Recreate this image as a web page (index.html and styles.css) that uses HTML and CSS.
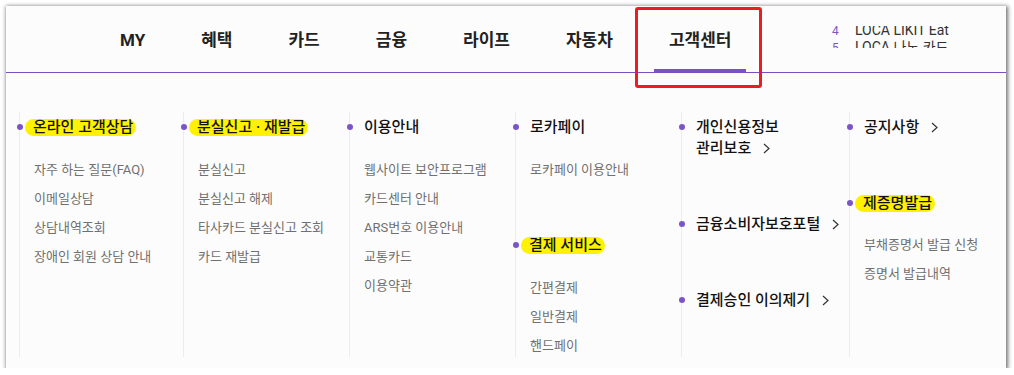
FILE: index.html
```html
<!DOCTYPE html>
<html lang="ko">
<head>
    <meta charset="UTF-8">
    <meta name="viewport" content="width=device-width, initial-scale=1.0">
    <title>고객센터</title>
    <link rel="stylesheet" href="styles.css">
</head>
<body>

    <div class="window">
        <div class="header">
            <ul class="gnb">
                <li class="gnb-item">MY</li>
                <li class="gnb-item">혜택</li>
                <li class="gnb-item">카드</li>
                <li class="gnb-item">금융</li>
                <li class="gnb-item">라이프</li>
                <li class="gnb-item">자동차</li>
                <li class="gnb-item active">고객센터</li>
            </ul>

            <!-- rolling ranking, only part of it is visible -->
            <div class="rank">
                <ol class="rank-list">
                    <li><span class="rank-num">4</span>LOCA LIKIT Eat</li>
                    <li><span class="rank-num">5</span>LOCA 나노 카드</li>
                </ol>
            </div>

            <div class="mark"></div>
        </div>

        <div class="menu">
            <div class="col">
                <div class="group">
                    <h3 class="title"><span class="hl">온라인 고객상담</span></h3>
                    <ul class="sub">
                        <li>자주 하는 질문(FAQ)</li>
                        <li>이메일상담</li>
                        <li>상담내역조회</li>
                        <li>장애인 회원 상담 안내</li>
                    </ul>
                </div>
            </div>

            <div class="col">
                <div class="group">
                    <h3 class="title"><span class="hl">분실신고 · 재발급</span></h3>
                    <ul class="sub">
                        <li>분실신고</li>
                        <li>분실신고 해제</li>
                        <li>타사카드 분실신고 조회</li>
                        <li>카드 재발급</li>
                    </ul>
                </div>
            </div>

            <div class="col">
                <div class="group">
                    <h3 class="title">이용안내</h3>
                    <ul class="sub">
                        <li>웹사이트 보안프로그램</li>
                        <li>카드센터 안내</li>
                        <li>ARS번호 이용안내</li>
                        <li>교통카드</li>
                        <li>이용약관</li>
                    </ul>
                </div>
            </div>

            <div class="col">
                <div class="group has-sub">
                    <h3 class="title">로카페이</h3>
                    <ul class="sub">
                        <li>로카페이 이용안내</li>
                    </ul>
                </div>
                <div class="group">
                    <h3 class="title"><span class="hl">결제 서비스</span></h3>
                    <ul class="sub">
                        <li>간편결제</li>
                        <li>일반결제</li>
                        <li>핸드페이</li>
                    </ul>
                </div>
            </div>

            <div class="col col-wide">
                <div class="group">
                    <h3 class="title">개인신용정보<br>관리보호<svg class="arrow" viewBox="0 0 7 11"><polyline points="1,1 6,5.5 1,10"/></svg></h3>
                </div>
                <div class="group">
                    <h3 class="title">금융소비자보호포털<svg class="arrow" viewBox="0 0 7 11"><polyline points="1,1 6,5.5 1,10"/></svg></h3>
                </div>
                <div class="group">
                    <h3 class="title">결제승인 이의제기<svg class="arrow" viewBox="0 0 7 11"><polyline points="1,1 6,5.5 1,10"/></svg></h3>
                </div>
            </div>

            <div class="col">
                <div class="group">
                    <h3 class="title">공지사항<svg class="arrow" viewBox="0 0 7 11"><polyline points="1,1 6,5.5 1,10"/></svg></h3>
                </div>
                <div class="group">
                    <h3 class="title"><span class="hl">제증명발급</span></h3>
                    <ul class="sub sub-tight">
                        <li>부채증명서 발급 신청</li>
                        <li>증명서 발급내역</li>
                    </ul>
                </div>
            </div>
        </div>
    </div>

</body>
</html>
```

FILE: styles.css
```css
body {
    margin: 0;
    background-color: #ffffff;
    font-family: Roboto, "Noto Sans CJK KR", sans-serif;
    color: #111;
}

ul, ol {
    list-style: none;
    margin: 0;
    padding: 0;
}

h3 {
    margin: 0;
}

/* Window frame */
.window {
    position: relative;
    margin: 6px 0 0 6px;
    width: 1000px;
    height: 362px;
    background-color: #fcfcfc;
    box-shadow: 1px 1px 4px 1px rgba(0, 0, 0, 0.55);
    overflow: hidden;
}

/* Header / GNB */
.header {
    position: relative;
    height: 66px;
    border-bottom: 1px solid #7a4fc6;
}

.gnb {
    display: flex;
    gap: 26px;
    margin-left: 99px;
}

.gnb-item {
    box-sizing: border-box;
    height: 66px;
    padding: 22px 15px 0;
    line-height: 24px;
    font-size: 17px;
    font-weight: 700;
    color: #222;
    border-bottom: 3px solid transparent;
}

.gnb-item.active {
    border-bottom-color: #7a52c7;
}

.rank {
    position: absolute;
    left: 826px;
    top: 20px;
    height: 22px;
    overflow: hidden;
}

.rank-list {
    margin-top: -4px;
}

.rank-list li {
    line-height: 16px;
    font-size: 14px;
    color: #333;
}

.rank-num {
    display: inline-block;
    width: 23px;
    font-size: 12px;
    color: #7b55c7;
}

/* red annotation box */
.mark {
    position: absolute;
    left: 629px;
    top: 1px;
    width: 121px;
    height: 75px;
    border: 3px solid #ec1c24;
    border-radius: 3px;
}

/* Mega menu */
.menu {
    display: flex;
    margin: 39px 0 0 13px;
}

.col {
    flex: none;
    box-sizing: border-box;
    width: 166px;
    height: 245px;
    padding: 5px 0 0 14px;
    border-left: 1px solid #ececec;
}

.col:first-child {
    width: 164px;
}

.col-wide {
    width: 168px;
}

.group + .group {
    margin-top: 55px;
}

.group.has-sub + .group {
    margin-top: 51px;
}

.title {
    position: relative;
    line-height: 21px;
    font-size: 15px;
    font-weight: 500;
    color: #111;
}

.title::before {
    content: "";
    position: absolute;
    left: -17px;
    top: 7px;
    width: 6px;
    height: 6px;
    border-radius: 50%;
    background-color: #7b55c7;
}

.hl {
    display: inline-block;
    line-height: 17px;
    padding: 0 3px 0 8px;
    margin-left: -9px;
    border-radius: 9px;
    background-color: #fff200;
}

.arrow {
    width: 7px;
    height: 11px;
    margin-left: 12px;
    vertical-align: -1px;
    fill: none;
    stroke: #333;
    stroke-width: 1.2;
}

.sub {
    margin-top: 17px;
}

.sub-tight {
    margin-top: 16px;
}

.sub li {
    line-height: 29px;
    font-size: 13px;
    color: #707070;
}
```
